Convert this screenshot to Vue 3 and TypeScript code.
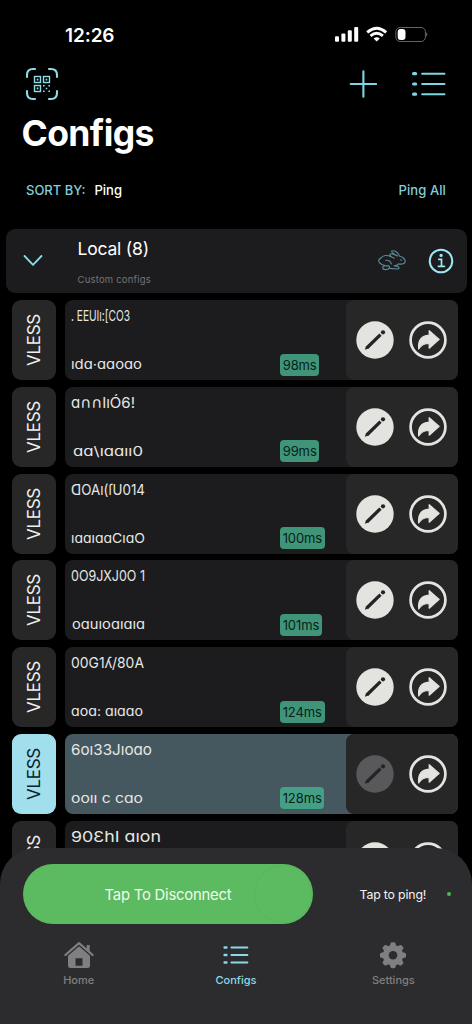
<script setup lang="ts">
interface Config {
  id: number
  name: string
  nameX: number
  nameWidth: number
  host?: string
  hostX?: number
  hostWidth?: number
  ping?: string
  active?: boolean
}

const configs: Config[] = [
  { id: 1, name: '. EEUIı:[CO3', nameX: 6, nameWidth: 59, host: 'ıdɑ·ɑɑoɑo', hostX: 6, hostWidth: 71, ping: '98ms' },
  { id: 2, name: 'ɑ∩∩IıÓ6!', nameX: 6, nameWidth: 64, host: 'ɑɑ\\ıɑɑıı0', hostX: 8, hostWidth: 70, ping: '99ms' },
  { id: 3, name: 'ꓷOAı(ſU014', nameX: 6, nameWidth: 74, host: 'ıɑɑıɑɑCıɑO', hostX: 6, hostWidth: 74, ping: '100ms' },
  { id: 4, name: '0O9JXJ0O 1', nameX: 6, nameWidth: 74, host: 'oɑuıoɑıɑıɑ', hostX: 7, hostWidth: 73, ping: '101ms' },
  { id: 5, name: '00G1ʎ/80A', nameX: 6, nameWidth: 73, host: 'ɑoɑ: ɑıɑɑo', hostX: 6, hostWidth: 72, ping: '124ms' },
  { id: 6, name: '6oı33Jıoɑo', nameX: 6, nameWidth: 81, host: 'ooıı c  cɑo', hostX: 6, hostWidth: 72, ping: '128ms', active: true },
  { id: 7, name: '90ƐhI  ɑıon', nameX: 6, nameWidth: 90 },
]
</script>

<template>
  <main class="screen">
    <div class="status">
      <span class="clock">12:26</span>
      <svg class="status-icons" width="94" height="18" viewBox="0 0 94 18">
        <g fill="#fff">
          <rect x="1" y="11.2" width="4" height="5.6" rx="1.1" />
          <rect x="7.4" y="8.4" width="4" height="8.4" rx="1.1" />
          <rect x="13.8" y="5.3" width="4" height="11.5" rx="1.1" />
          <rect x="20.2" y="2" width="4" height="14.8" rx="1.1" />
          <path d="M42.7 16.6 L39.6 13.4 Q42.7 11.1 45.8 13.4 Z" />
        </g>
        <g fill="none" stroke="#fff" stroke-width="2.9">
          <path d="M33.2 7.3 Q42.7 -.9 52.2 7.3" />
          <path d="M36.5 10.8 Q42.7 5.7 48.9 10.8" />
        </g>
        <rect x="61.8" y="2.5" width="29.6" height="14" rx="4.3" fill="none" stroke="#636363" />
        <path d="M92.3 7.2 Q94.4 9.4 92.3 11.7 Z" fill="#777" />
        <rect x="63.7" y="4.1" width="7.8" height="10.8" rx="3" fill="#fff" />
      </svg>
    </div>

    <header class="toolbar">
      <svg width="34" height="34" viewBox="0 0 34 34" fill="none" stroke="#8fdce7" stroke-width="2.1" stroke-linecap="round">
        <path d="M2 10V8Q2 2 8 2H10M24 2H26Q32 2 32 8V10M32 24V26Q32 32 26 32H24M10 32H8Q2 32 2 26V24" />
        <g stroke-width="1.4" stroke-linecap="butt">
          <rect x="9.5" y="9.5" width="6" height="6" />
          <rect x="18.5" y="9.5" width="6" height="6" />
          <rect x="9.5" y="18.5" width="6" height="6" />
        </g>
        <path
          stroke="none"
          fill="#8fdce7"
          d="M11.7 11.7h1.7v1.7h-1.7zM20.6 11.7h1.7v1.7h-1.7zM11.7 20.6h1.7v1.7h-1.7zM18 18h1.6v1.6H18zM23.4 18H25v1.6h-1.6zM20.7 20.7h1.6v1.6h-1.6zM18 23.4h1.6V25H18zM23.4 23.4H25V25h-1.6z"
        />
      </svg>
      <div class="tools">
        <svg width="28" height="28" viewBox="0 0 28 28" stroke="#7ed6e5" stroke-width="2.1" stroke-linecap="round">
          <path d="M14.4 1.3V26.7M1.7 14H27.1" />
        </svg>
        <svg width="35" height="26" viewBox="0 0 35 26" stroke="#7ed6e5" stroke-linecap="round">
          <path stroke-width="2.1" d="M11.2 2.7H33.4M11.2 13H33.4M11.2 23.2H33.4" />
          <path stroke-width="3.2" d="M2.6 2.7H4.6M2.6 13H4.6M2.6 23.2H4.6" />
        </svg>
      </div>
    </header>

    <h1>Configs</h1>

    <div class="sort">
      <span class="sort-label">SORT BY:</span>
      <span class="sort-value">Ping</span>
      <span class="ping-all">Ping All</span>
    </div>

    <section class="group">
      <svg class="chevron" width="20" height="13" viewBox="0 0 20 13" fill="none" stroke="#8bdceb" stroke-width="1.8" stroke-linecap="round" stroke-linejoin="round">
        <path d="M1.5 2L10 10.8L18.5 2" />
      </svg>
      <div class="group-text">
        <div class="group-title">Local (8)</div>
        <div class="group-sub">Custom configs</div>
      </div>
      <svg class="rabbit" width="30" height="23" viewBox="0 0 30 23" fill="none" stroke="#5b8a95" stroke-width="1.15" stroke-linecap="round" stroke-linejoin="round">
        <path d="M3.5 9.4C6 5.8 10.500 5.800 14 7.800L17.300 9.200C14.500 8.300 12.500 6.500 13 5.200C14 3.900 17 5.400 20.500 7C17.300 5 14 3.400 14.600 2.100C17.200 .8 21.400 3.200 22.500 7.200C25.800 7.500 28.400 10.500 28.200 12.800C27.500 15.300 23.500 15.400 21.500 14.900C20.500 16.300 19 16.700 17 16.800L20.300 17.400C22.500 17.800 22.500 19.900 20.700 20L12.800 19.400" />
        <path d="M3.500 9.400C1.200 10.300 1.200 12.900 3 14.300C4.700 15.800 6.700 16.400 8.700 16.800H11.500C13.500 17.700 12.700 20.500 8.500 20.600C5 20.600 4.700 17.400 8.200 16.800" />
        <path d="M9 11.400C11.500 10.800 13.800 12.400 14.300 14.900" />
        <circle cx="24" cy="11.100" r=".8" fill="#5b8a95" stroke="none" />
      </svg>
      <svg class="info" width="26" height="26" viewBox="0 0 26 26" fill="none" stroke="#9ce7f3" stroke-width="2">
        <circle cx="13" cy="13" r="11.3" />
        <path stroke-width="1.7" stroke-linecap="round" d="M10.8 11.3H13.5V18.3M10.4 18.3H16.4" />
        <circle cx="13.1" cy="7.4" r="1.6" fill="#9ce7f3" stroke="none" />
      </svg>
    </section>

    <ul class="list">
      <li v-for="config in configs" :key="config.id" class="row" :class="{ active: config.active }">
        <div class="tag"><span>VLESS</span></div>
        <div class="card">
          <div class="details">
            <svg class="labels" width="200" height="80" fill="#e7e7e4">
              <text :x="config.nameX" y="20.5" font-size="15" :textLength="config.nameWidth" lengthAdjust="spacingAndGlyphs">{{ config.name }}</text>
              <text v-if="config.host" :x="config.hostX" y="69" font-size="13" :textLength="config.hostWidth" lengthAdjust="spacingAndGlyphs">{{ config.host }}</text>
            </svg>
            <span v-if="config.ping" class="ping">{{ config.ping }}</span>
          </div>
          <div class="actions">
            <svg width="38" height="38" viewBox="0 0 38 38">
              <circle class="edit-disc" cx="19" cy="19" r="18.7" />
              <path d="M11 26.800L24.500 13.600" class="pencil" />
              <path d="M8.900 28.700L10 25.100L12.600 27.600Z" class="pencil-tip" />
              <circle class="pencil-tip" cx="27" cy="11.300" r="2.100" />
            </svg>
            <svg width="38" height="38" viewBox="0 0 38 38">
              <circle cx="19" cy="19" r="17.4" fill="none" stroke="#e3e3df" stroke-width="2.7" />
              <path d="M20.2 9.7L30.2 18.4L20.2 27.2V22.5C15.2 22.4 12.2 24 9.7 28C8.7 19.7 12.2 14.7 20.2 14.1Z" fill="#e3e3df" stroke="#e3e3df" stroke-width="1.2" stroke-linejoin="round" />
            </svg>
          </div>
        </div>
      </li>
    </ul>

    <footer class="dock">
      <div class="connect-row">
        <button class="connect">Tap To Disconnect<i class="knob"></i></button>
        <span class="tap-ping">Tap to ping!</span>
        <i class="dot"></i>
      </div>
      <nav class="tabs">
        <div class="tab">
          <svg width="32" height="28" viewBox="0 0 32 28" fill="#7f7f81">
            <path d="M2.4 14L16 2.2L29.6 14" fill="none" stroke="#7f7f81" stroke-width="2.2" stroke-linecap="round" stroke-linejoin="round" />
            <path d="M23.7 4.1H26.7V11L23.7 8.3Z" />
            <path fill-rule="evenodd" d="M16 5.3L27 14.8V24.5Q27 27 24.5 27H7.5Q5 27 5 24.5V14.8ZM12.5 17.2V24.8H19.5V17.2Z" />
          </svg>
          <span>Home</span>
        </div>
        <div class="tab current">
          <svg width="28" height="28" viewBox="0 0 28 28" stroke="#8bd9e7" stroke-linecap="round">
            <path stroke-width="1.9" d="M9.4 6.5H25.4M9.4 14H25.4M9.4 21.5H25.4" />
            <path stroke-width="2.7" d="M2.7 6.5H4.3M2.7 14H4.3M2.7 21.5H4.3" />
          </svg>
          <span>Configs</span>
        </div>
        <div class="tab">
          <svg width="28" height="28" viewBox="-14 -14.3 28 28" fill="#7f7f81">
            <g v-for="n in 4" :key="n" :transform="`rotate(${n * 45})`">
              <path d="M-3.3 -9L-2.3 -12.3Q-2 -13 -1.2 -13H1.2Q2 -13 2.3 -12.3L3.3 -9V9L2.3 12.3Q2 13 1.2 13H-1.2Q-2 13 -2.3 12.3L-3.3 9Z" />
            </g>
            <circle r="10.2" />
            <circle r="4.3" fill="#2c2c2e" />
          </svg>
          <span>Settings</span>
        </div>
      </nav>
    </footer>
  </main>
</template>

<style>
body {
  background: #000;
}
</style>

<style scoped>
* {
  box-sizing: border-box;
}
.screen {
  position: relative;
  width: 472px;
  height: 1024px;
  overflow: hidden;
  background: #000;
  color: #fff;
  font-family: Inter, "Noto Sans", "DejaVu Sans", sans-serif;
}
svg {
  display: block;
  flex: none;
}
.status {
  height: 67px;
  padding: 22px 44px 0 65px;
  display: flex;
  justify-content: space-between;
}
.clock {
  font-size: 19px;
  line-height: 27px;
  font-weight: 600;
  letter-spacing: -0.1px;
}
.status-icons {
  margin-top: 3px;
}
.toolbar {
  height: 34px;
  padding: 0 26px 0 25px;
  display: flex;
  align-items: center;
  justify-content: space-between;
}
.tools {
  display: flex;
  align-items: center;
  gap: 34px;
}
h1 {
  margin: 11px 0 0 21.5px;
  font-size: 35.5px;
  line-height: 43px;
  font-weight: 700;
  letter-spacing: -0.6px;
}
.sort {
  height: 24px;
  margin: 23px 26px 0;
  display: flex;
  align-items: center;
  font-size: 13px;
  line-height: 24px;
  font-weight: 500;
}
.sort-label {
  color: #85cddb;
  margin-right: 9px;
}
.ping-all {
  margin-left: auto;
  color: #85cddb;
  letter-spacing: 0.1px;
}
.group {
  height: 63.5px;
  margin: 27px 5.5px 7.5px;
  padding: 0 12.5px 0 17.5px;
  display: flex;
  align-items: center;
  background: #1c1c1e;
  border-radius: 9px;
}
.group-text {
  align-self: flex-start;
  margin-left: 34.5px;
  padding-top: 7.5px;
}
.group-title {
  font-size: 17.5px;
  line-height: 24px;
  letter-spacing: -0.2px;
}
.group-sub {
  margin-top: 12.5px;
  font-size: 9.5px;
  line-height: 13px;
  letter-spacing: 0.2px;
  color: #747477;
}
.rabbit {
  margin-left: auto;
  margin-right: 21.5px;
}
.list {
  margin: 0 14px 0 12px;
  padding: 0;
  list-style: none;
  display: flex;
  flex-direction: column;
  gap: 6.8px;
}
.row {
  height: 80px;
  display: flex;
  gap: 9px;
}
.tag {
  width: 44.3px;
  display: flex;
  align-items: center;
  justify-content: center;
  background: #272728;
  border-radius: 9px;
  color: #f0f0ee;
}
.tag span {
  transform: rotate(-90deg);
  font-size: 17px;
  line-height: 20px;
  letter-spacing: -0.3px;
}
.card {
  flex: 1;
  display: flex;
  background: #1c1c1e;
  border-radius: 8px;
}
.details {
  flex: 1;
  display: flex;
  align-items: flex-end;
}
.labels {
  margin-right: 14.7px;
}
.ping {
  height: 22px;
  margin-bottom: 4.5px;
  padding: 0 2.7px;
  border-radius: 4px;
  background: #409478;
  color: #06231b;
  font-size: 13px;
  line-height: 22px;
  letter-spacing: -0.1px;
}
.actions {
  width: 112.5px;
  padding-right: 1px;
  display: flex;
  align-items: center;
  justify-content: center;
  gap: 14.6px;
  background: #272728;
  border-radius: 8px;
}
.edit-disc {
  fill: #e3e3df;
}
.pencil {
  stroke: #242424;
  stroke-width: 3.3px;
}
.pencil-tip {
  fill: #242424;
}
.active .tag {
  background: #a1dfed;
}
.active .tag span {
  color: #07212c;
}
.active .card {
  background: #45585f;
}
.active .ping {
  background: #459f84;
}
.active .edit-disc {
  fill: #59595b;
}
.dock {
  position: absolute;
  left: 0;
  right: 0;
  bottom: 0;
  height: 176px;
  padding-top: 16px;
  background: #2c2c2e;
  border-radius: 36px 36px 0 0;
}
.connect-row {
  height: 60px;
  padding: 0 21px 0 23px;
  display: flex;
  align-items: center;
}
.connect {
  position: relative;
  width: 290px;
  height: 60px;
  border: 0;
  padding: 1px 0 0;
  border-radius: 30px;
  background: #5cba61;
  color: #f0faec;
  font-family: Inter, sans-serif;
  font-size: 14.8px;
  letter-spacing: -0.2px;
}
.knob {
  position: absolute;
  right: 1px;
  top: 1px;
  width: 58px;
  height: 58px;
  border: 1px solid #58b65d;
  border-radius: 50%;
}
.tap-ping {
  margin-left: 46.5px;
  font-size: 12.3px;
  letter-spacing: -0.15px;
  color: #f3f3f3;
}
.dot {
  width: 4px;
  height: 4px;
  margin-left: auto;
  border-radius: 50%;
  background: #50b45c;
}
.tabs {
  padding-top: 17px;
  display: flex;
}
.tab {
  flex: 1;
  display: flex;
  flex-direction: column;
  align-items: center;
  font-size: 11px;
  line-height: 14px;
  font-weight: 500;
  color: #7f7f81;
}
.tab span {
  margin-top: 4px;
}
.current {
  color: #8bd9e7;
}
</style>
